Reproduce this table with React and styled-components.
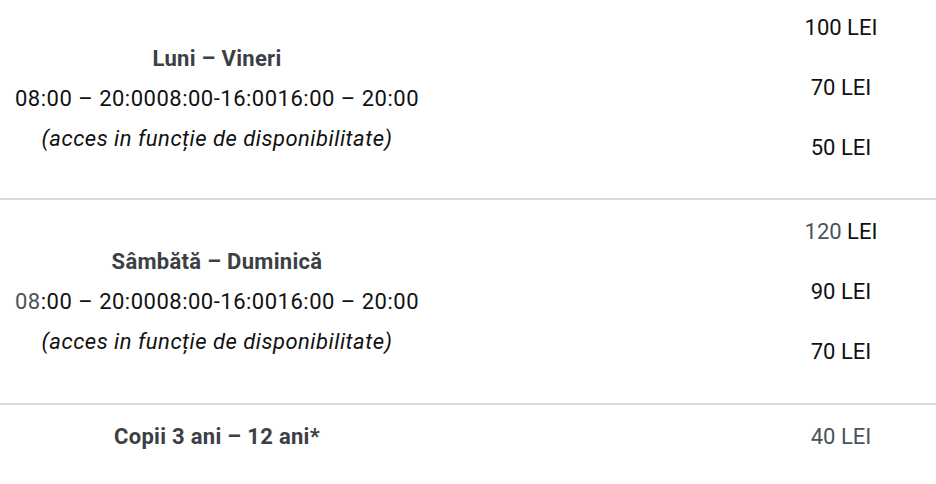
import React from 'react';
import styled, { createGlobalStyle } from 'styled-components';

const GlobalStyle = createGlobalStyle`
    html, body {
        margin: 0;
        padding: 0;
        background: #ffffff;
    }
    body {
        font-family: Roboto, "Liberation Sans", sans-serif;
        color: #111111;
    }
`

const Table = styled.div`
    width: 936px;
    display: flex;
    flex-direction: column;
`

const Row = styled.div`
    display: grid;
    grid-template-columns: 434px 1fr 190px;
    align-items: center;
    height: ${({ h }) => h}px;
    border-bottom: ${({ last }) => last ? 'none' : '2px solid #d9d9d9'};
`

const DayCell = styled.div`
    display: flex;
    flex-direction: column;
    align-items: center;
    gap: 12px;
    text-align: center;
`

const DayTitle = styled.div`
    font-weight: 700;
    font-size: 22px;
    line-height: 28px;
    letter-spacing: 0.3px;
    color: #3b4046;
`

const Hours = styled.div`
    font-size: 22px;
    line-height: 28px;
    color: #111111;
    letter-spacing: 0.5px;
`

const Note = styled.div`
    font-size: 22px;
    line-height: 28px;
    font-style: italic;
    letter-spacing: 0.5px;
    color: #111111;
`

const Muted = styled.span`
    color: #4c535b;
`

const PriceCell = styled.div`
    grid-column: 3;
    align-self: ${({ top }) => top ? 'start' : 'center'};
    padding-top: ${({ top }) => top ? top : 0}px;
    display: flex;
    flex-direction: column;
    align-items: center;
    gap: 32px;
`

const Price = styled.div`
    font-size: 22px;
    line-height: 28px;
    color: ${({ muted }) => muted ? '#4c535b' : '#111111'};
`

const rows = [
    {
        title: 'Luni – Vineri',
        height: 198,
        top: 14,
        muted08: false,
        prices: [['100', 'LEI'], ['70', 'LEI'], ['50', 'LEI']],
    },
    {
        title: 'Sâmbătă – Duminică',
        height: 203,
        top: 18,
        muted08: true,
        prices: [['120', 'LEI', true], ['90', 'LEI'], ['70', 'LEI']],
    },
]

const App = () => {
    return (
        <>
            <GlobalStyle />
            <Table>
                {rows.map((r) => (
                    <Row key={r.title} h={r.height}>
                        <DayCell>
                            <DayTitle>{r.title}</DayTitle>
                            <Hours>
                                {r.muted08 ? <Muted>08</Muted> : '08'}:00 – 20:0008:00-16:0016:00 – 20:00
                            </Hours>
                            <Note>(acces in funcție de disponibilitate)</Note>
                        </DayCell>
                        <PriceCell top={r.top}>
                            {r.prices.map(([n, unit, muted]) => (
                                <Price key={n}>
                                    {muted ? <Muted>{n}</Muted> : n} {unit}
                                </Price>
                            ))}
                        </PriceCell>
                    </Row>
                ))}
                <Row h={64} last>
                    <DayCell>
                        <DayTitle>Copii 3 ani – 12 ani*</DayTitle>
                    </DayCell>
                    <PriceCell>
                        <Price muted>40 LEI</Price>
                    </PriceCell>
                </Row>
            </Table>
        </>
    )
}

export default App
